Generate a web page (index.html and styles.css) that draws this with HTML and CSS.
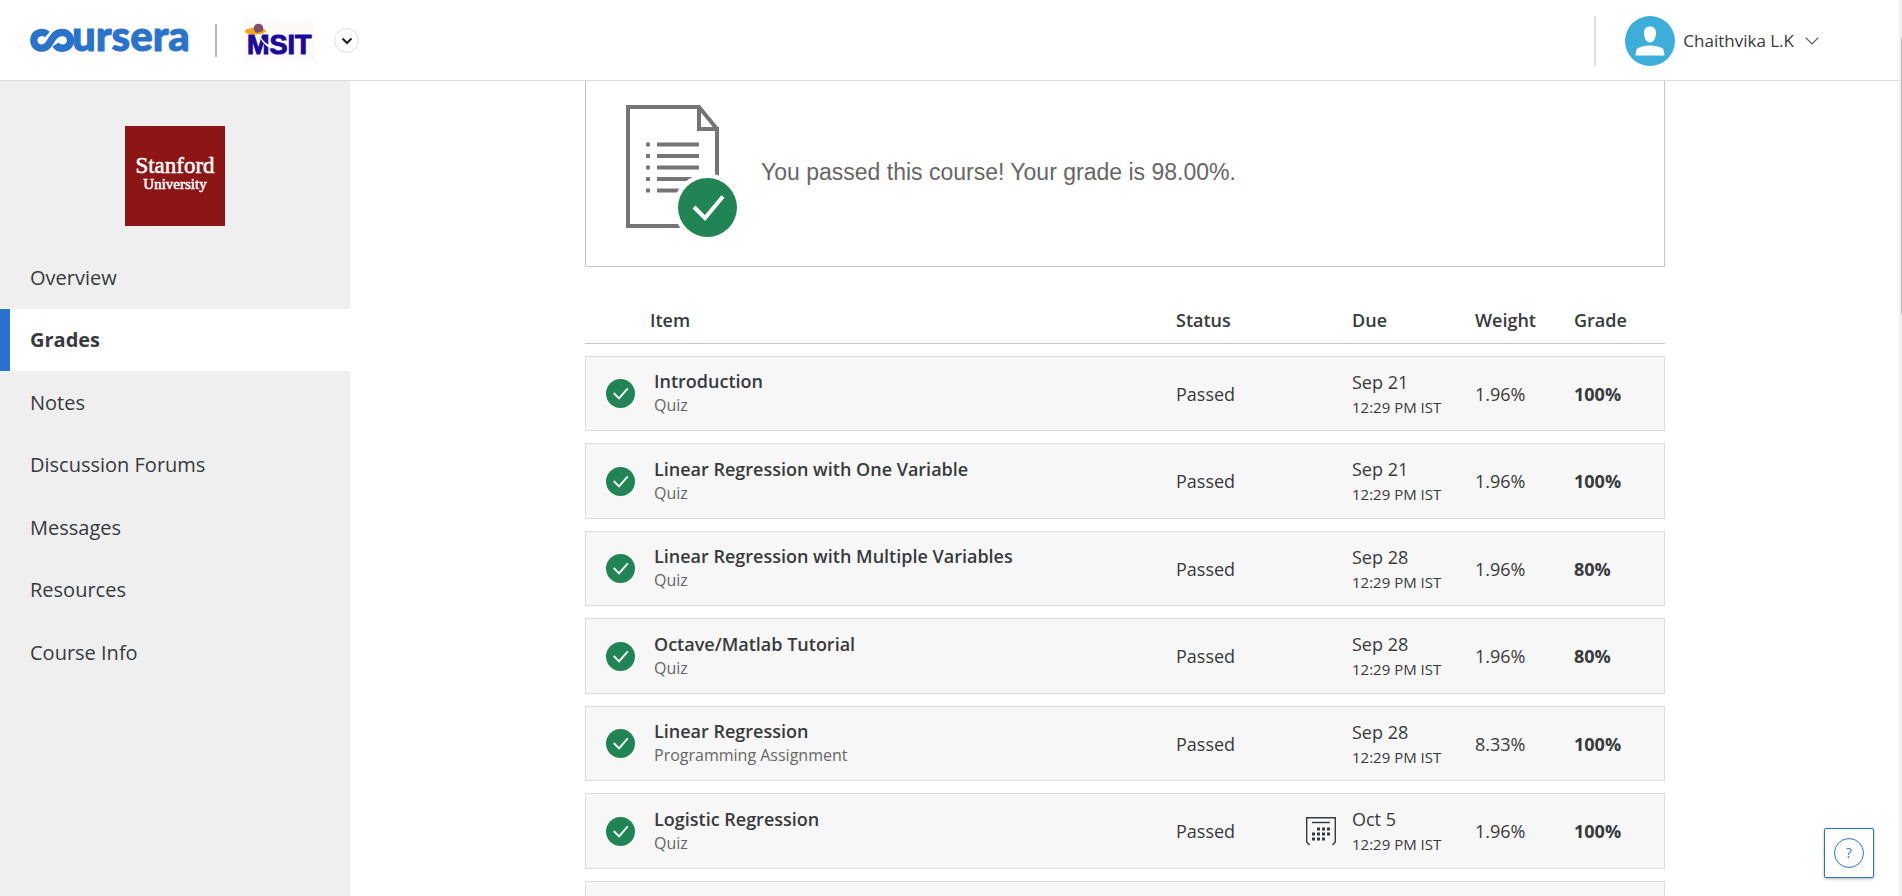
FILE: index.html
```html
<!DOCTYPE html>
<html lang="en">
<head>
<meta charset="utf-8">
<meta name="viewport" content="width=device-width, initial-scale=1">
<title>Grades | Coursera</title>
<link rel="stylesheet" href="styles.css">
</head>
<body>
<svg width="0" height="0" class="defs" aria-hidden="true">
  <symbol id="check" viewBox="0 0 30 30">
    <circle cx="15" cy="15" r="15" fill="#208455"/>
    <path d="M8 14.500l5.500 5.500L22.500 9.800" fill="none" stroke="#fff" stroke-width="1.900"/>
  </symbol>
</svg>
<header class="topbar">
  <a class="brand" href="#" aria-label="Coursera">
    <svg width="166" height="60" viewBox="0 0 166 60">
      <path d="M17.500 23.500C13 19.500 3.800 21.500 3.800 29C3.800 37.800 14 39.500 18.500 33.500C22 29 24 21.500 32 21.500C37 21.500 40.500 25 40.500 29.500C40.500 34.500 36.500 37.300 32.500 37.300C30 37.300 27 36 25.500 33.500" fill="none" stroke="#2a73cc" stroke-width="7.400"/>
      <text x="42" y="40" class="brand-text">ursera</text>
    </svg>
  </a>
  <span class="brand-rule"></span>
  <a class="partner" href="#" aria-label="MSIT">
    <svg width="70" height="40" viewBox="0 0 70 40">
      <rect width="70" height="40" fill="#fbfaf8"/>
      <ellipse cx="11.500" cy="10" rx="10.500" ry="3.200" fill="#f5a51c"/>
      <circle cx="14.500" cy="7.500" r="4.800" fill="#80506c"/>
      <path d="M1 10q10 5 20-1l-2 3q-8 3-17 0z" fill="#f5a51c"/>
      <text x="3" y="33" class="partner-text">MSIT</text>
      <path d="M16 16q5 8 15 11q-9 1-15-11z" fill="#fff" stroke="#fff"/>
    </svg>
  </a>
  <button class="switcher" type="button" aria-label="Switch program">
    <svg width="12" height="8" viewBox="0 0 12 8"><path d="M1.500 1.500L6 6l4.500-4.500" fill="none" stroke="#1f1f1f" stroke-width="2"/></svg>
  </button>
  <button class="user" type="button">
    <svg width="50" height="50" viewBox="0 0 50 50">
      <circle cx="25" cy="25" r="25" fill="#3daeda"/>
      <path d="M25 10.500c4 0 6.200 2.500 6 7c-.200 5-2.800 9-6 9s-5.800-4-6-9c-.200-4.500 2-7 6-7z" fill="#fff"/>
      <path d="M10.500 39.500c.500-4 .500-6.500 2.500-7.500c3-1.300 7-2.500 12-2.500s9 1.200 12 2.500c2 1 2 3.500 2.500 7.500z" fill="#fff"/>
    </svg>
    <span>Chaithvika L.K</span>
    <svg class="caret" width="14" height="8" viewBox="0 0 14 8"><path d="M.700.700L7 7L13.300.700" fill="none" stroke="#555" stroke-width="1.200"/></svg>
  </button>
</header>
<div class="page">
  <aside class="sidebar">
    <svg class="school" width="100" height="100" viewBox="0 0 100 100" role="img" aria-label="Stanford University">
      <rect width="100" height="100" fill="#8c1515"/>
      <text x="50" y="47" class="school-name">Stanford</text>
      <text x="50" y="63" class="school-sub">University</text>
    </svg>
    <nav class="menu">
      <a href="#">Overview</a>
      <a href="#" class="active" aria-current="page">Grades</a>
      <a href="#">Notes</a>
      <a href="#">Discussion Forums</a>
      <a href="#">Messages</a>
      <a href="#">Resources</a>
      <a href="#">Course Info</a>
    </nav>
  </aside>
  <main class="content">
    <section class="result">
      <svg width="112" height="134" viewBox="0 0 112 134" aria-hidden="true">
        <g fill="none" stroke="#757575" stroke-width="4">
          <path d="M73 2H2V121H91V24L73 2V24H93"/>
          <path d="M31 39.500h42M31 51h42M31 62.500h42M31 74h42M31 85.500h42"/>
          <path d="M20 39.500h4M20 51h4M20 62.500h4M20 74h4M20 85.500h4"/>
        </g>
        <circle cx="81.500" cy="102.500" r="34" fill="#fff"/>
        <circle cx="81.500" cy="102.500" r="29.500" fill="#208455"/>
        <path d="M68 102l11 11L97 91.500" fill="none" stroke="#fff" stroke-width="4"/>
      </svg>
      <p>You passed this course! Your grade is 98.00%.</p>
    </section>
    <table class="grades">
      <thead>
        <tr><th class="c-icon"></th><th class="c-item">Item</th><th class="c-status">Status</th><th class="c-cal"></th><th class="c-due">Due</th><th class="c-weight">Weight</th><th class="c-grade">Grade</th></tr>
      </thead>
      <tbody>
        <tr><td><svg class="ok"><use href="#check"/></svg></td><td class="item"><a href="#">Introduction</a><small>Quiz</small></td><td>Passed</td><td></td><td class="due">Sep 21<small>12:29 PM IST</small></td><td>1.96%</td><td><b>100%</b></td></tr>
        <tr><td><svg class="ok"><use href="#check"/></svg></td><td class="item"><a href="#">Linear Regression with One Variable</a><small>Quiz</small></td><td>Passed</td><td></td><td class="due">Sep 21<small>12:29 PM IST</small></td><td>1.96%</td><td><b>100%</b></td></tr>
        <tr><td><svg class="ok"><use href="#check"/></svg></td><td class="item"><a href="#">Linear Regression with Multiple Variables</a><small>Quiz</small></td><td>Passed</td><td></td><td class="due">Sep 28<small>12:29 PM IST</small></td><td>1.96%</td><td><b>80%</b></td></tr>
        <tr><td><svg class="ok"><use href="#check"/></svg></td><td class="item"><a href="#">Octave/Matlab Tutorial</a><small>Quiz</small></td><td>Passed</td><td></td><td class="due">Sep 28<small>12:29 PM IST</small></td><td>1.96%</td><td><b>80%</b></td></tr>
        <tr><td><svg class="ok"><use href="#check"/></svg></td><td class="item"><a href="#">Linear Regression</a><small>Programming Assignment</small></td><td>Passed</td><td></td><td class="due">Sep 28<small>12:29 PM IST</small></td><td>8.33%</td><td><b>100%</b></td></tr>
        <tr><td><svg class="ok"><use href="#check"/></svg></td><td class="item"><a href="#">Logistic Regression</a><small>Quiz</small></td><td>Passed</td><td>
          <svg class="cal" width="30" height="29" viewBox="0 0 30 29" aria-hidden="true">
            <path d="M3.500 28L.700 25V.700H29.300V25L26.500 28" fill="none" stroke="#373a3c" stroke-width="1.400"/>
            <path d="M6 5.500H24" stroke="#373a3c" stroke-width="1.400"/>
            <path d="M11 12h14M6 17h19M6 22h14" stroke="#373a3c" stroke-width="3" stroke-dasharray="3 2"/>
          </svg></td><td class="due">Oct 5<small>12:29 PM IST</small></td><td>1.96%</td><td><b>100%</b></td></tr>
        <tr><td></td><td></td><td></td><td></td><td></td><td></td><td></td></tr>
      </tbody>
    </table>
  </main>
</div>
<button class="help" type="button" aria-label="Help"><span>?</span></button>
<div class="scroll" aria-hidden="true"><div class="thumb"></div></div>
</body>
</html>
```

FILE: styles.css
```css
* { box-sizing: border-box; }
html, body { height: 100%; }
body {
  margin: 0;
  padding-right: 3px;
  display: flex;
  flex-direction: column;
  overflow: hidden;
  background: #fff;
  color: #373a3c;
  font: 18px/24px "Open Sans", sans-serif;
}
a { color: inherit; text-decoration: none; }
button { font: inherit; color: inherit; cursor: pointer; }
svg { display: block; flex: none; }
.defs { position: absolute; }

.topbar {
  flex: none;
  display: flex;
  align-items: center;
  height: 81px;
  padding: 1px 80px 0 30px;
  border-bottom: 1px solid #dcdcdc;
}
.brand-text {
  font: 900 42px Lato, sans-serif;
  fill: #2a73cc;
  stroke: #2a73cc;
  stroke-width: 1px;
}
.brand-rule {
  width: 2px;
  height: 33px;
  margin: 0 27px 0 19px;
  background: #bbb;
}
.partner-text {
  font: bold 27px "Liberation Sans", sans-serif;
  fill: #1a0a9c;
  stroke: #1a0a9c;
  stroke-width: 1px;
}
.switcher {
  display: grid;
  place-items: center;
  width: 25px;
  height: 25px;
  margin-left: 20px;
  padding: 0;
  border: 1px solid #ddd;
  border-radius: 50%;
  background: #fff;
}
.user {
  display: flex;
  align-items: center;
  gap: 8px;
  height: 50px;
  margin: 0 0 0 auto;
  padding: 0 0 0 29px;
  border: 0;
  border-left: 2px solid #dfdfdf;
  background: none;
  font-size: 17px;
}
.caret { margin-left: 3px; }

.page { flex: 1; min-height: 0; display: flex; }
.sidebar { flex: none; width: 350px; background: #efefef; }
.school { margin: 45px auto 20px; }
.school-name, .school-sub {
  font: 23px "Liberation Serif", serif;
  fill: #fff;
  stroke: #fff;
  stroke-width: 0.5px;
  text-anchor: middle;
}
.school-sub { font-size: 15px; }
.menu a {
  display: flex;
  align-items: center;
  height: 62px;
  padding-left: 30px;
  font-size: 20px;
}
.menu a:nth-child(odd) { height: 63px; }
.menu .active {
  padding-left: 20px;
  border-left: 10px solid #2a73cc;
  background: #fff;
  font-weight: 700;
}

.content {
  flex: 1;
  min-width: 0;
  padding: 0 19px 0 20px;
  overflow: hidden;
}
.result {
  display: flex;
  align-items: center;
  gap: 23px;
  max-width: 1080px;
  height: 186px;
  margin: 0 auto;
  padding: 0 40px 4px;
  border: 1px solid #c7c7c7;
  border-top: 0;
}
.result p {
  margin: 0;
  color: #666;
  font: 23px/28px "Liberation Sans", sans-serif;
}

.grades {
  width: 100%;
  max-width: 1080px;
  margin: 15px auto 0;
  table-layout: fixed;
  border-collapse: separate;
  border-spacing: 0 12px;
}
.c-icon { width: 65px; }
.c-status { width: 130px; }
.c-cal { width: 46px; }
.c-due { width: 123px; }
.c-weight { width: 99px; }
.c-grade { width: 91px; }
th {
  height: 50px;
  padding: 2px 0 0;
  border-bottom: 1px solid #c7c7c7;
  text-align: left;
  font-weight: 600;
}
td {
  height: 75px;
  padding: 0;
  background: #f7f7f7;
  border: solid #dcdcdc;
  border-width: 1px 0;
}
tr:nth-child(even) td { height: 76px; }
td:first-child { border-left-width: 1px; }
td:last-child { border-right-width: 1px; }
.item { padding-left: 4px; }
.item a { display: block; font-weight: 600; }
td small { display: block; font-size: 16px; line-height: 25px; color: #666; }
.due { padding-top: 2px; }
.due small { font-size: 15px; line-height: 26px; color: inherit; }
.ok { width: 29px; height: 29px; margin-left: 20px; }

.help {
  position: fixed;
  right: 28px;
  bottom: 18px;
  display: grid;
  place-items: center;
  width: 50px;
  height: 50px;
  padding: 0;
  border: 1px solid #2a73cc;
  border-radius: 2px;
  background: #fff;
  box-shadow: 0 1px 3px rgba(0, 0, 0, 0.3);
  color: #2a73cc;
}
.help span {
  width: 30px;
  height: 30px;
  border: 1px solid #2a73cc;
  border-radius: 50%;
  font-size: 14px;
  line-height: 28px;
}
.scroll {
  position: fixed;
  top: 0;
  right: 0;
  bottom: 0;
  width: 3px;
  padding: 38px 0 0 2px;
  background: #f1f1f1;
}
.thumb { height: 276px; background: #b9b9b9; }
```
